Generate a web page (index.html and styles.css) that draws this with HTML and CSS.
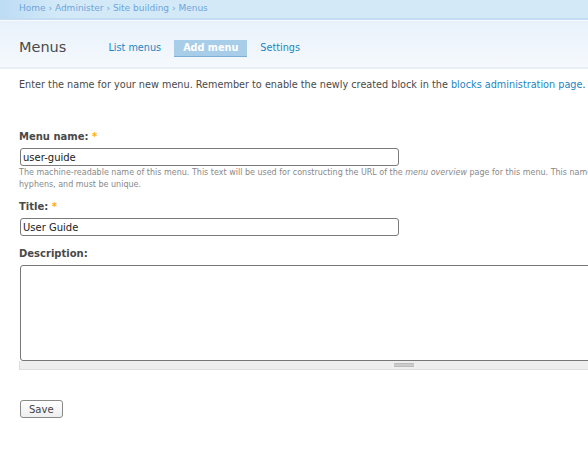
FILE: index.html
```html
<!DOCTYPE html>
<html>
<head>
<meta charset="utf-8">
<link rel="stylesheet" href="styles.css">
</head>
<body>
<div class="page">
  <div class="topbar">
    <div class="breadcrumb"><a href="#">Home</a> › <a href="#">Administer</a> › <a href="#">Site building</a> › <a href="#">Menus</a></div>
  </div>
  <div class="header">
    <h2 class="title">Menus</h2>
    <ul class="tabs">
      <li><a href="#">List menus</a></li>
      <li class="active"><a href="#">Add menu</a></li>
      <li><a href="#">Settings</a></li>
    </ul>
  </div>
  <div class="content">
    <p class="help">Enter the name for your new menu. Remember to enable the newly created block in the <a href="#">blocks administration page</a>.</p>
    <form class="form">
      <div class="item">
        <label class="label">Menu name: <span class="req">*</span></label>
        <input class="text" type="text" value="user-guide">
        <div class="desc">The machine-readable name of this menu. This text will be used for constructing the URL of the <em>menu overview</em> page for this menu. This name must contain only lowercase letters, numbers, and hyphens, and must be unique.</div>
      </div>
      <div class="item item-title">
        <label class="label">Title: <span class="req">*</span></label>
        <input class="text" type="text" value="User Guide">
      </div>
      <div class="item">
        <label class="label">Description:</label>
        <div class="ta-wrap">
          <textarea class="ta"></textarea>
          <div class="grippie"><span class="grip"></span></div>
        </div>
      </div>
      <button class="save" type="button">Save</button>
    </form>
  </div>
</div>
</body>
</html>
```
FILE: styles.css
```css
html, body {
  margin: 0;
  padding: 0;
  background: #fff;
  overflow: hidden;
}
body {
  font-family: "DejaVu Sans", Verdana, sans-serif;
  color: #494949;
}
a { color: #2385c2; text-decoration: none; }
.page { width: 588px; }
.topbar {
  height: 18px;
  background: linear-gradient(to right, #bcdcf4 0px, #d3e9f8 60px, #d4e9f8 100%);
  border-bottom: 2px solid #c3dcf3;
  padding-left: 19px;
  box-sizing: content-box;
}
.breadcrumb {
  font-size: 9px;
  line-height: 16px;
  color: #6ea5d8;
}
.breadcrumb a { color: #6ea5d8; }
.header {
  height: 46px;
  border-top: 1px solid #f8fbfe;
  background: linear-gradient(to bottom, #e8f1fb, #f5f9fd);
  border-bottom: 2px solid #e9eff6;
  display: flex;
  align-items: flex-start;
  padding-left: 19px;
}
.title {
  margin: 17px 0 0 0;
  font-size: 14.5px;
  font-weight: normal;
  color: #4a4a4a;
  font-family: "DejaVu Sans", sans-serif;
  line-height: 18px;
}
.tabs {
  list-style: none;
  margin: 19px 0 0 35px;
  padding: 0;
  display: flex;
}
.tabs li a {
  display: block;
  font-size: 9.7px;
  line-height: 16px;
  padding: 0 7px;
  color: #2385c2;
}
.tabs li.active a {
  background: #a7cde8;
  border-bottom: 1px solid #7caed6;
  color: #fff;
  font-weight: bold;
  padding: 0 9px;
  margin: 0 6px 0 6px;
}
.content { padding: 8px 19px 0 19px; }
.help {
  margin: 0;
  font-size: 9.7px;
  line-height: 16px;
  white-space: nowrap;
  color: #494949;
}
.form { margin-top: 37px; }
.item { margin-bottom: 12px; }
.item-title { margin-bottom: 11px; }
.label {
  display: block;
  font-size: 10px;
  font-weight: bold;
  line-height: 14px;
  margin-bottom: 4px;
  color: #494949;
}
.req { color: #ffae00; }
.text {
  display: block;
  box-sizing: border-box;
  width: 379px;
  height: 18px;
  margin: 0 0 0 1px;
  border: 1px solid #7a7a7a;
  border-radius: 3px;
  padding: 0 2px;
  font-family: "DejaVu Sans", sans-serif;
  font-size: 10px;
  color: #222;
  background: #fff;
}
.desc {
  margin: 1px 0 -3px 0;
  font-size: 8px;
  line-height: 12px;
  color: #898989;
  width: 792px;
}
.ta-wrap { width: 768px; margin-left: 1px; }
.ta {
  display: block;
  box-sizing: border-box;
  width: 100%;
  height: 96px;
  border: 1px solid #777;
  border-radius: 3px 0 0 3px;
  resize: none;
  margin: 0;
}
.grippie {
  height: 8px;
  background: #eee;
  border: 1px solid #ddd;
  border-top: none;
  display: flex;
  justify-content: center;
  align-items: center;
  box-sizing: content-box;
  margin-left: -1px;
}
.grip {
  width: 20px;
  height: 2px;
  border-top: 1px solid #bbb;
  border-bottom: 1px solid #bbb;
  background: #ccc;
}
.save {
  display: block;
  margin: 30px 0 0 1px;
  height: 18px;
  padding: 0 8px;
  font-family: "DejaVu Sans", sans-serif;
  font-size: 10px;
  color: #444;
  background: linear-gradient(#fff, #eee);
  border: 1px solid #8a8a8a;
  border-radius: 3px;
}
```
